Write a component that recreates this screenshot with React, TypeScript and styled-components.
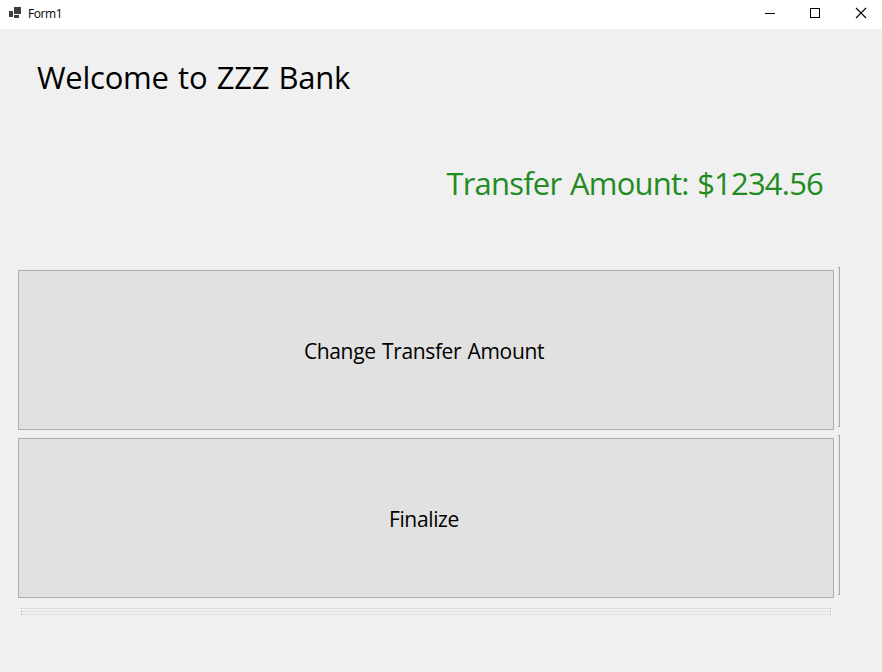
import React from "react";
import styled, { createGlobalStyle } from "styled-components";

const GlobalStyle = createGlobalStyle`
  * { box-sizing: border-box; }
  body { margin: 0; background: #f0f0f0; overflow: hidden; }
`;

const Window = styled.main`
  width: 882px;
  height: 672px;
  display: flex;
  flex-direction: column;
  background: #f0f0f0;
  color: #000;
  font-family: "Open Sans", "Noto Sans", sans-serif;
`;

const TitleBar = styled.header`
  height: 29px;
  flex: none;
  display: flex;
  align-items: flex-start;
  background: #fff;
`;

const AppIcon = styled.svg`
  width: 28px;
  height: 28px;
`;

const Title = styled.span`
  flex: 1;
  font-size: 12px;
  line-height: 27px;
  letter-spacing: -0.4px;
`;

const Control = styled.button`
  width: 46px;
  height: 28px;
  padding: 0;
  border: 0;
  background: transparent;

  svg { display: block; }
`;

const Content = styled.section`
  display: flex;
  flex-direction: column;
  width: 840px;
`;

const Label = styled.div`
  font-size: 31px;
  font-weight: 400;
  line-height: 44px;
  white-space: nowrap;
`;

const Welcome = styled(Label)`
  margin: 26px 0 0 37px;
  letter-spacing: -0.25px;
  word-spacing: 1.6px;
`;

const Amount = styled(Label)`
  align-self: flex-end;
  margin: 62px 17px 0 0;
  color: #228b22;
  letter-spacing: -0.8px;
  word-spacing: 1.4px;
`;

const Actions = styled.div`
  display: flex;
  flex-direction: column;
  gap: 8px;
  padding-left: 18px;
  margin-top: 65px;
`;

const ActionRow = styled.div`
  display: flex;
  gap: 4px;
  height: 160px;
`;

const ActionButton = styled.button`
  width: 816px;
  height: 160px;
  padding: 2px 4px 0 0;
  border: 1px solid #adadad;
  background: #e1e1e1;
  color: #000;
  font-family: inherit;
  font-size: 21px;
  letter-spacing: -0.35px;
  word-spacing: 1.2px;
`;

const ClippedButton = styled.div`
  width: 2px;
  height: 160px;
  margin-top: -3px;
  border: solid #adadad;
  border-width: 1px 1px 1px 0;
  background: #e1e1e1;
`;

const Slivers = styled.div`
  display: flex;
  flex-direction: column;
  gap: 2px;
  margin: 10px 0 0 21px;
`;

const Sliver = styled.div`
  width: 810px;
  height: 1px;
  border: solid #adadad;
  border-width: 0 1px;
  background: #e1e1e1;
`;

const actions = ["Change Transfer Amount", "Finalize"];

export default function App() {
  return (
    <Window>
      <GlobalStyle />
      <TitleBar>
        <AppIcon viewBox="0 0 28 28" fill="#3f3f42" shapeRendering="crispEdges">
          <path d="M14 7h7v7h-7zM9 11h4v6H9zM14 15h5v3h-5z" />
        </AppIcon>
        <Title>Form1</Title>
        <Control aria-label="Minimize">
          <svg width="46" height="28" shapeRendering="crispEdges"><path d="M21 13h10v1H21z" /></svg>
        </Control>
        <Control aria-label="Maximize">
          <svg width="46" height="28" fill="none" stroke="#000" shapeRendering="crispEdges"><path d="M20.5 8.5h9v9h-9z" /></svg>
        </Control>
        <Control aria-label="Close">
          <svg width="46" height="28" fill="none" stroke="#000" strokeWidth="1.1"><path d="M20 8l10 10M30 8L20 18" /></svg>
        </Control>
      </TitleBar>
      <Content>
        <Welcome as="h1">Welcome to ZZZ Bank</Welcome>
        <Amount>Transfer Amount: $1234.56</Amount>
        <Actions>
          {actions.map((label) => (
            <ActionRow key={label}>
              <ActionButton>{label}</ActionButton>
              <ClippedButton />
            </ActionRow>
          ))}
        </Actions>
        <Slivers>
          <Sliver />
          <Sliver />
          <Sliver />
        </Slivers>
      </Content>
    </Window>
  );
}
